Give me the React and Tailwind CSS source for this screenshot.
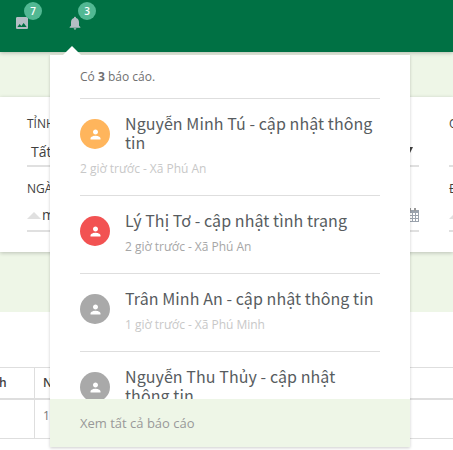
import React from "react";
import { MdImage, MdNotifications, MdPerson } from "react-icons/md";

const reports = [
  { name: "Nguyễn Minh Tú - cập nhật thông tin", meta: "2 giờ trước - Xã Phú An", color: "bg-[#ffb55c]", metaClass: "-ml-[45px] mt-[9px] text-[#c8c8c8]", height: "h-[97px]" },
  { name: "Lý Thị Tơ - cập nhật tình trạng", meta: "2 giờ trước - Xã Phú An", color: "bg-[#f25252]", metaClass: "mt-[9px] text-[#a6a6a6]", height: "h-[78px]" },
  { name: "Trân Minh An - cập nhật thông tin", meta: "1 giờ trước - Xã Phú Minh", color: "bg-[#a9a9a9]", metaClass: "mt-[9px] text-[#c8c8c8]", height: "h-[78px]" },
  { name: "Nguyễn Thu Thủy - cập nhật thông tin", meta: "", color: "bg-[#a9a9a9]", metaClass: "", height: "h-[97px]" },
];

function HeaderIcon({ icon: Icon, count, badgeClass }) {
  return (
    <div className="relative h-4 w-4 text-[#b4bec5]">
      <Icon size={16} />
      <span className={`absolute -top-[13px] flex h-[18px] w-[18px] items-center justify-center rounded-full bg-[#52b893] text-[10px] leading-none font-semibold text-white ${badgeClass}`}>
        {count}
      </span>
    </div>
  );
}

function Report({ report }) {
  return (
    <div className={`flex shrink-0 gap-[15px] border-b border-[#dedede] pt-[15px] ${report.height}`}>
      <div className={`mt-[5px] flex h-[30px] w-[30px] shrink-0 items-center justify-center rounded-full text-white ${report.color}`}>
        <MdPerson size={15} />
      </div>
      <div className="min-w-0 flex-1">
        <div className="font-['Noto_Sans_CJK_JP',sans-serif] text-[16px] leading-[19px] font-normal tracking-[0.08px] text-[#575c60]">{report.name}</div>
        <div className={`text-[12px] leading-4 tracking-[-0.03px] ${report.metaClass}`}>{report.meta}</div>
      </div>
    </div>
  );
}

function Filters() {
  return (
    <div className="flex h-[155px] gap-[30px] overflow-hidden bg-white pl-[27px] text-[#404040] shadow-[0_1px_4px_rgba(0,0,0,0.22)]">
      <div className="w-[392px] shrink-0">
        <div className="mt-[18px] h-[19px] text-[12px] leading-[18px]">TỈNH</div>
        <div className="flex h-[33px] items-center justify-between border-b-2 border-[#e0e0e0] pt-[3px] pr-[6px] pl-1 text-[14px]">
          <span>Tất</span>
          <svg width="9" height="8" viewBox="0 0 9 8"><path d="M0 0H9L5 8H4Z" fill="#404040" /></svg>
        </div>
        <div className="mt-[12px] h-[20px] text-[12px] leading-[19px]">NGÀY</div>
        <div className="flex h-[33px] items-center border-b-2 border-[#e0e0e0] text-[14px]">
          <svg width="14" height="8" viewBox="0 0 14 8" className="mr-px"><path d="M0 8L7 1L14 8Z" fill="#e0e0e0" /></svg>
          <span className="flex-1">mm</span>
          <svg width="13" height="14" viewBox="0 0 13 14" shapeRendering="crispEdges">
            <path d="M0 2H13V14H0Z" fill="#9ba3ad" />
            <path d="M3 0H5V3H3ZM8 0H10V3H8Z" fill="#999" />
            <path d="M1 5H3V7H1ZM4 5H6V7H4ZM7 5H9V7H7ZM10 5H12V7H10ZM1 8H3V10H1ZM4 8H6V10H4ZM7 8H9V10H7ZM10 8H12V10H10ZM1 11H3V13H1ZM4 11H6V13H4ZM7 11H9V13H7ZM10 11H12V13H10Z" fill="#fff" />
          </svg>
        </div>
      </div>
      <div className="w-[392px] shrink-0">
        <div className="mt-[18px] h-[19px] text-[12px] leading-[18px]">Q</div>
        <div className="h-[33px] border-b-2 border-[#e0e0e0]" />
        <div className="mt-[12px] h-[20px] text-[12px] leading-[19px]">Đ</div>
        <div className="flex h-[33px] items-center border-b-2 border-[#e0e0e0]">
          <svg width="14" height="8" viewBox="0 0 14 8"><path d="M0 8L7 1L14 8Z" fill="#e0e0e0" /></svg>
        </div>
      </div>
    </div>
  );
}

export default function App() {
  return (
    <div className="relative h-[450px] w-[453px] overflow-hidden bg-white font-['Open_Sans','Noto_Sans',sans-serif]">
      <header className="relative flex h-[52px] gap-[37px] bg-[#007144] pt-[15px] pl-[14px] shadow-[0_1px_4px_rgba(0,0,0,0.25)]">
        <HeaderIcon icon={MdImage} count={7} badgeClass="left-[10px]" />
        <HeaderIcon icon={MdNotifications} count={3} badgeClass="left-[11px]" />
      </header>
      <main>
        <div className="bg-[#eef6e7] pt-[45px] pb-[60px]">
          <Filters />
        </div>
        <div className="mt-[55px] border-y border-[#dedede] text-[12px] text-[#404040]">
          <div className="flex h-[32px] items-center border-b-2 border-[#dedede] font-semibold">
            <div className="flex h-full w-[35px] items-center border-r border-[#dedede]"><span className="-ml-px">h</span></div>
            <div className="pl-2">N</div>
          </div>
          <div className="flex h-[38px]">
            <div className="w-[35px] border-r border-[#dedede]" />
            <div className="pt-[7px] pl-2 text-[#777]">1</div>
          </div>
        </div>
      </main>

      <section className="absolute top-[55px] left-[50px] flex h-[392px] w-[360px] flex-col bg-white shadow-[0_1px_3px_rgba(0,0,0,0.2)]">
        <svg width="18" height="9" viewBox="0 0 18 9" className="absolute -top-[9px] left-[13px]"><path d="M0 9L9 0L18 9Z" fill="#fff" /></svg>
        <div className="mx-[30px] flex h-[44px] shrink-0 items-center border-b border-[#dedede] text-[12px] text-[#707070]">
          <p>Có <b>3</b> báo cáo.</p>
        </div>
        <div className="flex min-h-0 flex-1 flex-col overflow-hidden px-[30px]">
          {reports.map((report) => <Report key={report.name} report={report} />)}
        </div>
        <footer className="flex h-12 shrink-0 items-center bg-[#eef6e7] px-[30px] pt-px text-[13px] text-[#999]">Xem tất cả báo cáo</footer>
      </section>
    </div>
  );
}
